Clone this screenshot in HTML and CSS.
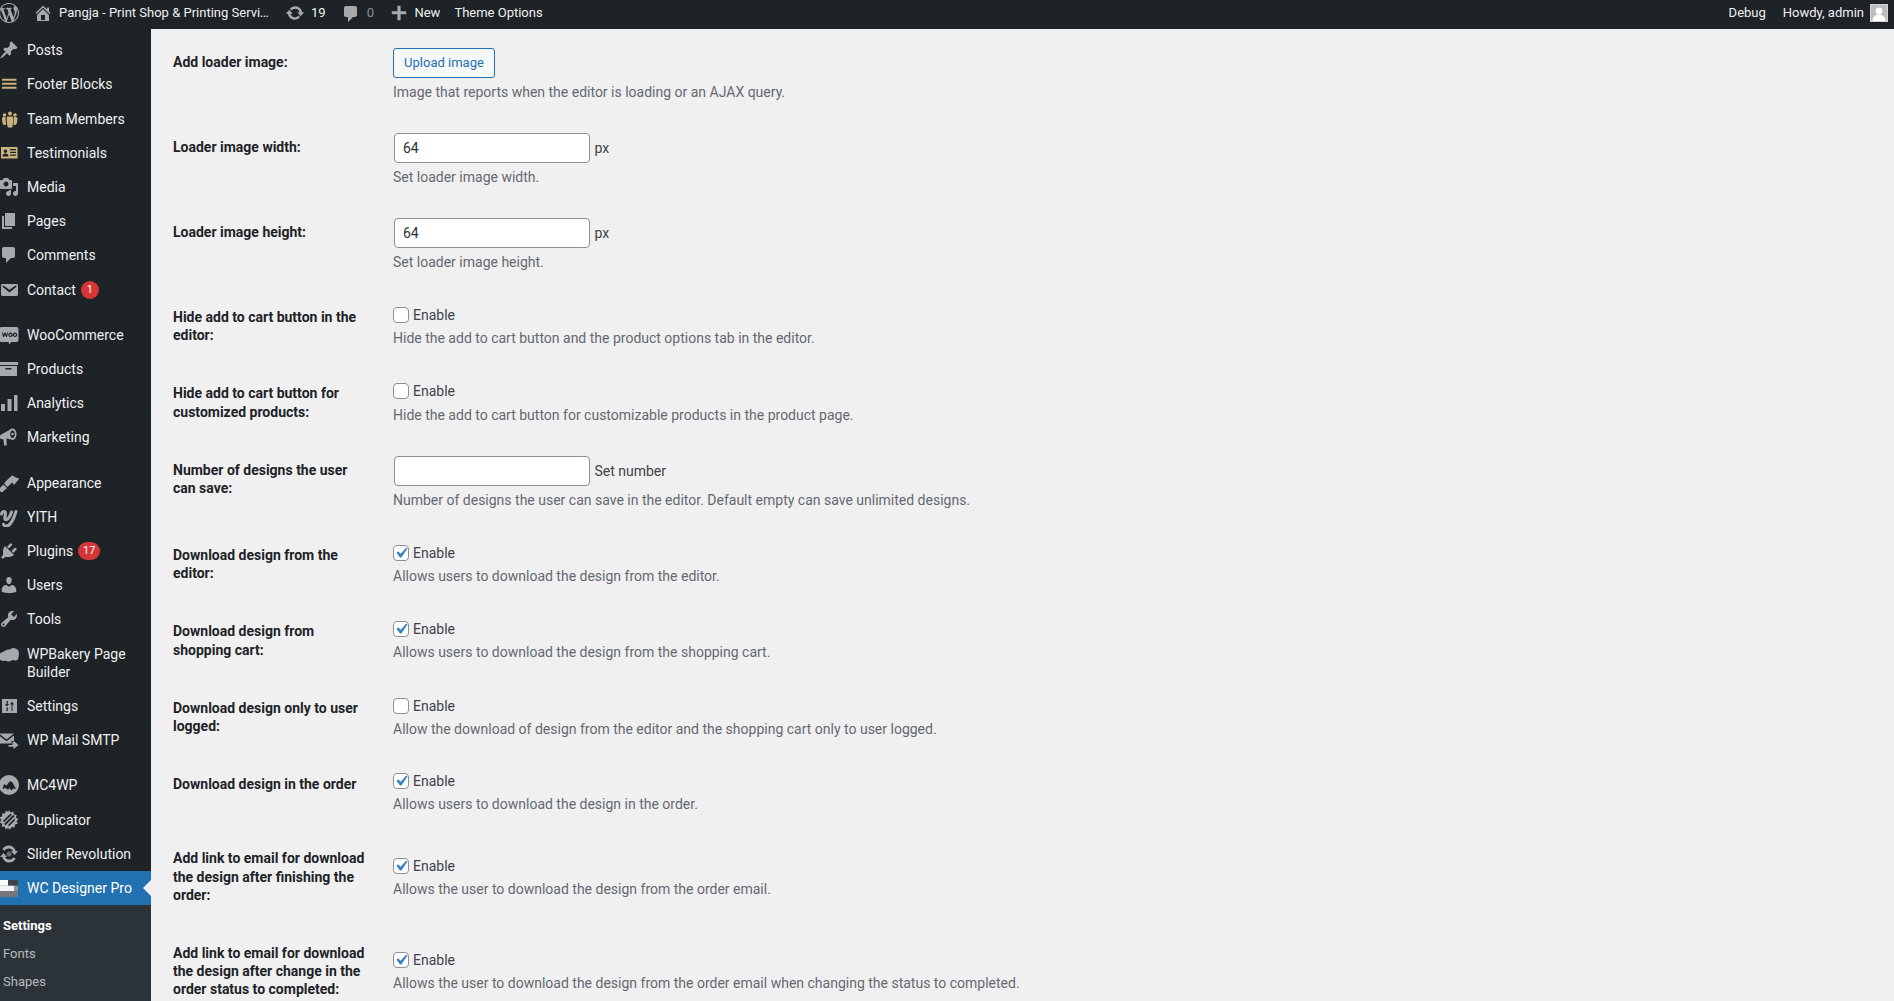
FILE: index.html
```html
<!DOCTYPE html>
<html lang="en">
<head>
<meta charset="utf-8">
<title>WC Designer Pro Settings</title>
<link rel="stylesheet" href="styles.css">
</head>
<body>
<header class="bar">
  <nav class="bar-left">
    <a class="bar-item logo"><svg class="bar-ico logo-ico" viewBox="0 0 20 20"><path fill-rule="evenodd" d="M20 10c0-5.51-4.49-10-10-10C4.48 0 0 4.49 0 10c0 5.52 4.48 10 10 10 5.51 0 10-4.48 10-10zM7.78 15.37L4.37 6.22c.55-.02 1.17-.08 1.17-.08.5-.06.44-1.13-.06-1.11 0 0-1.45.11-2.37.11-.18 0-.37 0-.58-.01C4.12 2.69 6.87 1.11 10 1.11c2.33 0 4.45.87 6.05 2.34-.68-.11-1.65.39-1.65 1.58 0 .74.45 1.36.9 2.1.35.61.55 1.36.55 2.46 0 1.49-1.4 5-1.4 5l-3.03-8.37c.54-.02.82-.17.82-.17.5-.05.44-1.25-.06-1.22 0 0-1.44.12-2.38.12-.87 0-2.33-.12-2.33-.12-.5-.03-.56 1.2-.06 1.22l.92.08 1.26 3.41zM17.41 10c.24-.64.74-1.87.43-4.25.7 1.29 1.05 2.71 1.05 4.25 0 3.29-1.73 6.24-4.4 7.78.97-2.59 1.94-5.2 2.92-7.78zM6.1 18.09C3.12 16.65 1.11 13.53 1.11 10c0-1.3.23-2.48.72-3.59C3.25 10.3 4.67 14.2 6.1 18.09zm4.03-6.63l2.58 6.98c-.86.29-1.76.45-2.71.45-.79 0-1.57-.11-2.29-.33.81-2.38 1.62-4.74 2.42-7.1z"/></svg></a>
    <a class="bar-item site"><svg class="bar-ico" viewBox="0 0 20 20"><path d="M16 8.5l1.53 1.53-1.06 1.06L10 4.62l-6.47 6.47-1.06-1.06L10 2.5l4 4v-2h2v4zm-6-2.46l6 5.99V18H4v-5.97zM12 17v-5H8v5h4z"/></svg><span class="site-name">Pangja - Print Shop &amp; Printing Servi…</span></a>
    <a class="bar-item updates"><svg class="bar-ico" viewBox="0 0 20 20"><path d="M10.2 3.28c3.53 0 6.43 2.61 6.92 6h2.08l-3.5 4-3.5-4h2.32c-.45-1.97-2.21-3.45-4.32-3.45-1.45 0-2.73.71-3.54 1.78L4.95 5.66C6.23 4.2 8.11 3.28 10.2 3.28zm-.4 13.44c-3.52 0-6.43-2.61-6.92-6H.8l3.5-4c1.17 1.33 2.33 2.67 3.5 4H5.48c.45 1.97 2.21 3.45 4.32 3.45 1.45 0 2.73-.71 3.54-1.78l1.71 1.95c-1.28 1.46-3.15 2.38-5.25 2.38z"/></svg><span>19</span></a>
    <a class="bar-item comments"><svg class="bar-ico" viewBox="0 0 20 20"><path d="M5 2h9c1.1 0 2 .9 2 2v7c0 1.1-.9 2-2 2h-2l-5 5v-5H5c-1.1 0-2-.9-2-2V4c0-1.1.9-2 2-2z"/></svg><span class="muted">0</span></a>
    <a class="bar-item new"><svg class="bar-ico" viewBox="0 0 20 20"><path d="M18 8v3.5h-6.25V18h-3.5v-6.5H2V8h6.25V2h3.5v6z"/></svg><span>New</span></a>
    <a class="bar-item theme">Theme Options</a>
  </nav>
  <nav class="bar-right">
    <a class="bar-item debug">Debug</a>
    <a class="bar-item howdy">Howdy, admin<svg class="avatar" viewBox="0 0 18 18"><rect width="18" height="18" fill="#d4d4d4"/><rect x="1" y="1" width="16" height="16" fill="#bdbdbd"/><circle cx="9" cy="7" r="3.4" fill="#fff"/><path d="M2.5 17c0-4.5 3-6.2 6.5-6.2s6.500 1.700 6.500 6.200z" fill="#fff"/></svg></a>
  </nav>
</header>

<div class="layout">
  <aside class="side">
    <ul class="menu">
      <li class="item"><svg class="ico" viewBox="0 0 20 20"><path d="M10.44 3.02l1.82-1.82 6.36 6.35-1.83 1.82c-1.05-.68-2.48-.57-3.41.36l-.75.75c-.92.93-1.04 2.35-.35 3.41l-1.83 1.82-2.41-2.41-2.8 2.79c-.42.42-3.38 2.71-3.8 2.29s1.86-3.39 2.28-3.81l2.79-2.79L4.1 9.36l1.83-1.82c1.05.69 2.48.57 3.4-.36l.75-.75c.93-.92 1.05-2.35.36-3.41z"/></svg>Posts</li>
      <li class="item"><svg class="ico gold" viewBox="0 0 20 20"><path d="M3 4.700h14.500v2H3zM3 8.700h14.500v2H3zM3 12.700h14.500v2H3z"/></svg>Footer Blocks</li>
      <li class="item"><svg class="ico gold" viewBox="0 0 20 20"><circle cx="5.500" cy="6" r="1.800"/><circle cx="11" cy="4.500" r="2"/><circle cx="16" cy="6" r="1.800"/><path d="M3 9.500c0-1 1-1.500 2-1.500h1.500L7 16H5c-1 0-2-3-2-6.500zM18.500 9.500c0-1-1-1.500-2-1.500H15l-.5 8h2c1 0 2-3 2-6.500zM8 7.500h6c.5 2 .5 6-.8 11H8.800C7.500 14 7.500 10 8 7.500z"/></svg>Team Members</li>
      <li class="item"><svg class="ico gold" viewBox="0 0 20 20"><path fill-rule="evenodd" d="M2 4h16.500v11.500H2zM11 6v1.300h6V6zm0 2.700V10h6V8.700zm0 2.800v1.300h6v-1.300zM6.500 6.500a1.700 1.700 0 1 0 .01 0zM3.500 13.500h6c0-2-1-3-3-3s-3 1-3 3z"/></svg>Testimonials</li>
      <li class="item"><svg class="ico" viewBox="0 0 20 20"><path d="M13 11V4c0-.55-.45-1-1-1h-1.670L9 1H5L3.670 3H2c-.55 0-1 .45-1 1v7c0 .55.45 1 1 1h10c.55 0 1-.45 1-1zM7 4.500c1.380 0 2.500 1.120 2.500 2.500S8.380 9.500 7 9.500 4.500 8.380 4.500 7 5.620 4.500 7 4.500zM14 6h5v10.500c0 1.380-1.120 2.500-2.500 2.500S14 17.880 14 16.500s1.120-2.500 2.500-2.500c.17 0 .34.02.5.05V9h-3V6zm-4 8.050V13h2v3.500c0 1.380-1.120 2.500-2.500 2.500S7 17.880 7 16.500 8.120 14 9.500 14c.17 0 .34.02.5.05z"/></svg>Media</li>
      <li class="item"><svg class="ico" viewBox="0 0 20 20"><path d="M6 15V2h10v13H6zm-1 1h8v2H3V5h2v11z"/></svg>Pages</li>
      <li class="item"><svg class="ico" viewBox="0 0 20 20"><path d="M5 2h9c1.100 0 2 .9 2 2v7c0 1.100-.9 2-2 2h-2l-5 5v-5H5c-1.100 0-2-.9-2-2V4c0-1.100.9-2 2-2z"/></svg>Comments</li>
      <li class="item"><svg class="ico" viewBox="0 0 20 20"><path d="M3.870 4h13.250C18.370 4 19 4.590 19 5.790v8.420c0 1.190-.63 1.790-1.880 1.790H3.870c-1.250 0-1.880-.6-1.880-1.790V5.790c0-1.200.63-1.790 1.880-1.790zm6.620 8.600l6.740-5.530c.24-.2.430-.66.130-1.070-.29-.41-.82-.42-1.170-.17l-5.700 3.860L4.800 5.830c-.35-.25-.88-.24-1.170.17-.3.410-.11.870.13 1.070z"/></svg>Contact<span class="badge">1</span></li>
      <li class="item sep"><svg class="ico" viewBox="0 0 20 20"><path fill-rule="evenodd" d="M2.500 2h15A2 2 0 0 1 19.500 4v11a2 2 0 0 1-2 2H12l-1.500 2.500L9.500 17h-7a2 2 0 0 1-2-2V4a2 2 0 0 1 2-2zM3 7.500l1 4.500h1l1-2.500 1 2.500h1l1-4.500H8l-.6 2.700L6.500 7.500h-1l-.9 2.700L4 7.500zm8.500 0a2.200 2.300 0 1 0 .01 0zm0 1.200a1 1.100 0 1 1-.01 0zm4.500-1.200a2.200 2.300 0 1 0 .01 0zm0 1.200a1 1.100 0 1 1-.01 0z"/></svg>WooCommerce</li>
      <li class="item"><svg class="ico" viewBox="0 0 20 20"><path fill-rule="evenodd" d="M0 3h19v3H0zM1 7h17v10H1zM6.500 9v1.500h6V9z"/></svg>Products</li>
      <li class="item"><svg class="ico" viewBox="0 0 20 20"><path d="M2 11h4v7H2zM8.500 6h4v12h-4zM15 2h3.500v16H15z"/></svg>Analytics</li>
      <li class="item"><svg class="ico" viewBox="0 0 20 20"><path fill-rule="evenodd" d="M13.500 1.500c2.500 0 4 2.500 4 5.500s-1.500 6-4 6c-.5 0-1-.2-1.300-.4L7.500 11.500 7.800 18.500H5L4.500 12.500 2 12c-1.500-.5-1.500-4 0-4.500L10.500 3c.8-1 1.800-1.500 3-1.500zm0 2c-1.300 0-2.300 1.600-2.300 3.700s1 3.800 2.300 3.800 2.300-1.700 2.300-3.800-1-3.700-2.300-3.700z"/><circle cx="13.500" cy="7" r="1.300"/></svg>Marketing</li>
      <li class="item sep"><svg class="ico" viewBox="0 0 20 20"><path d="M8 7l5-4.500c2 .5 4 2.500 7.500 3L15 12c-.5-1-1-1.500-2-2.500L8.500 14 5 10.500zM4.300 11.500L8 15l-5 4.500-3-2V16z"/></svg>Appearance</li>
      <li class="item"><svg class="ico yith" viewBox="0 0 20 20"><path d="M2.500 7C3.500 3.500 6.500 4 6.500 6.500c0 2.500-1.500 4.500-.3 5.800 1.800 1.500 5-2.500 6.300-7.300"/><path d="M17 4.500c-1.500 5-3.500 10.500-7 13.500-2 1.500-5 1.500-5.500-.8"/></svg>YITH</li>
      <li class="item"><svg class="ico" viewBox="0 0 20 20"><path d="M13.110 4.360L9.870 7.600 8 5.730l3.240-3.240c.35-.34 1.050-.2 1.560.32.52.51.66 1.210.31 1.550zm-8 1.770l.91-1.120 9.010 9.010-1.190.84c-.71.710-2.630 1.160-3.820 1.160H6.140L4.900 17.260c-.59.590-1.540.590-2.120 0-.59-.58-.59-1.530 0-2.120l1.240-1.240v-3.880c0-1.130.4-3.190 1.090-3.890zm7.260 3.970l3.240-3.240c.34-.35 1.040-.21 1.550.31.52.51.66 1.210.31 1.550l-3.240 3.250z"/></svg>Plugins<span class="badge wide">17</span></li>
      <li class="item"><svg class="ico" viewBox="0 0 20 20"><path d="M10 9.250c-2.270 0-2.730-3.440-2.730-3.440C7 4.020 7.820 2 9.970 2c2.160 0 2.980 2.020 2.710 3.810 0 0-.41 3.440-2.680 3.440zm0 2.570L12.720 10c2.390 0 4.520 2.330 4.520 4.530v2.490s-3.650 1.130-7.240 1.130c-3.650 0-7.240-1.130-7.240-1.130v-2.490c0-2.250 1.940-4.480 4.470-4.480z"/></svg>Users</li>
      <li class="item"><svg class="ico" viewBox="0 0 20 20"><path d="M16.680 9.770c-1.340 1.340-3.300 1.670-4.950.99l-5.410 6.520c-.99.990-2.590.99-3.580 0s-.99-2.590 0-3.570l6.520-5.420c-.68-1.650-.35-3.610.99-4.950 1.280-1.280 3.120-1.620 4.720-1.060l-2.890 2.890 2.820 2.820 2.860-2.870c.53 1.580.18 3.390-1.080 4.650zM3.810 16.210c.4.390 1.040.39 1.430 0 .4-.4.4-1.040 0-1.430-.39-.4-1.030-.4-1.430 0-.39.390-.39 1.030 0 1.430z"/></svg>Tools</li>
      <li class="item"><svg class="ico ico-top" viewBox="0 0 20 20"><circle cx="4.500" cy="11.500" r="4.500"/><circle cx="9.500" cy="10.500" r="6"/><circle cx="14.500" cy="8.500" r="5.500"/><circle cx="16" cy="12" r="3.500"/></svg>WPBakery Page Builder</li>
      <li class="item"><svg class="ico" viewBox="0 0 20 20"><path fill-rule="evenodd" d="M3 3h15v14H3zM7.500 5v3H6l2 2.500 2-2.500H8.800V5zm5 3.500v6.500h1V8.500h1.500l-2-3-2 3zM7.500 11.500V15h1.300v-3.500z"/></svg>Settings</li>
      <li class="item"><svg class="ico" viewBox="0 0 20 20"><path d="M0 3.500h15L7.500 9.500zM0 5.500l7.500 5.800L15 5.500V11h-2.500v2.500H0zM13.500 12v3H9.500v1.800h5.500l-1 1.700h1.500l4-3.500-4-3.500z"/></svg>WP Mail SMTP</li>
      <li class="item sep"><svg class="ico" viewBox="0 0 20 20"><path fill-rule="evenodd" d="M10 0a10 10 0 1 1 0 20 10 10 0 0 1 0-20zM3.500 14l1.500-5 2.500 1.500L11 6l2.500 1.500L17 14l-3-.5-1.500 2-2-2.500-1.500 2-2-2z"/></svg>MC4WP</li>
      <li class="item"><svg class="ico" viewBox="0 0 20 20"><path fill-rule="evenodd" d="M10 0l1.500 2.500 2.800-1 .5 2.900 2.900.5-1 2.800L19.500 9l-2 2.200 1.400 2.600-2.900.8-.3 3-2.900-.6L11 19.500 9 18l-2.400 1.500-.9-2.900-3 .2.400-3L.6 12.500l1.700-2.500L.6 7.500l2.700-1.300-.3-3 3 .2L7 .6 9.200 2zM14 5L5 14l1.500 1.200 9-9zM11 4L4.200 10.800l.5 1.700L13 4.500zM15.500 8.500L8.500 15.500l2 .3 5.500-5.500z"/></svg>Duplicator</li>
      <li class="item"><svg class="ico" viewBox="0 0 20 20"><path d="M10 4.500c1.800 0 3.300 1 4 2.500h-2l3.500 4 3.500-4h-2.300C15.800 3.500 13 1.500 10 1.500S4.500 3 3.300 5.500l2.500 1.300C6.500 5.400 8 4.500 10 4.500zM10 15.500c-1.800 0-3.300-1-4-2.500h2L4.500 9 1 13h2.300c.9 3.500 3.700 5.500 6.700 5.500s5.500-1.500 6.700-4l-2.500-1.300c-.7 1.400-2.200 2.300-4.200 2.300z"/><circle cx="10" cy="10" r="2.500" opacity=".55"/></svg>Slider Revolution</li>
      <li class="item active"><svg class="ico blocks" viewBox="0 0 20 20"><rect x="1" y="2" width="8" height="5.700" fill="#fff"/><rect x="9" y="2" width="10" height="5.700" fill="#3f4449"/><rect x="1" y="7.700" width="14" height="5.300" fill="#f4f4f4"/><rect x="15" y="7.700" width="4" height="5.300" fill="#8f9296"/><rect x="1" y="13" width="18" height="6" fill="#74777b"/></svg>WC Designer Pro</li>
    </ul>
    <ul class="sub">
      <li class="sub-item current">Settings</li>
      <li class="sub-item">Fonts</li>
      <li class="sub-item">Shapes</li>
    </ul>
  </aside>

  <main class="main">
    <div class="row">
      <div class="key">Add loader image:</div>
      <div class="val"><button class="btn">Upload image</button><p class="desc">Image that reports when the editor is loading or an AJAX query.</p></div>
    </div>
    <div class="row">
      <div class="key">Loader image width:</div>
      <div class="val"><input class="inp" type="text" value="64"> <span class="unit">px</span><p class="desc">Set loader image width.</p></div>
    </div>
    <div class="row">
      <div class="key">Loader image height:</div>
      <div class="val"><input class="inp" type="text" value="64"> <span class="unit">px</span><p class="desc">Set loader image height.</p></div>
    </div>
    <div class="row">
      <div class="key">Hide add to cart button in the editor:</div>
      <div class="val"><label class="chk"><input type="checkbox">Enable</label><p class="desc">Hide the add to cart button and the product options tab in the editor.</p></div>
    </div>
    <div class="row">
      <div class="key">Hide add to cart button for customized products:</div>
      <div class="val"><label class="chk"><input type="checkbox">Enable</label><p class="desc">Hide the add to cart button for customizable products in the product page.</p></div>
    </div>
    <div class="row">
      <div class="key">Number of designs the user can save:</div>
      <div class="val"><input class="inp" type="text"> <span class="unit">Set number</span><p class="desc">Number of designs the user can save in the editor. Default empty can save unlimited designs.</p></div>
    </div>
    <div class="row">
      <div class="key">Download design from the editor:</div>
      <div class="val"><label class="chk"><input type="checkbox" checked>Enable</label><p class="desc">Allows users to download the design from the editor.</p></div>
    </div>
    <div class="row">
      <div class="key">Download design from shopping cart:</div>
      <div class="val"><label class="chk"><input type="checkbox" checked>Enable</label><p class="desc">Allows users to download the design from the shopping cart.</p></div>
    </div>
    <div class="row">
      <div class="key">Download design only to user logged:</div>
      <div class="val"><label class="chk"><input type="checkbox">Enable</label><p class="desc">Allow the download of design from the editor and the shopping cart only to user logged.</p></div>
    </div>
    <div class="row">
      <div class="key">Download design in the order</div>
      <div class="val"><label class="chk"><input type="checkbox" checked>Enable</label><p class="desc">Allows users to download the design in the order.</p></div>
    </div>
    <div class="row">
      <div class="key">Add link to email for download the design after finishing the order:</div>
      <div class="val"><label class="chk"><input type="checkbox" checked>Enable</label><p class="desc">Allows the user to download the design from the order email.</p></div>
    </div>
    <div class="row">
      <div class="key">Add link to email for download the design after change in the order status to completed:</div>
      <div class="val"><label class="chk"><input type="checkbox" checked>Enable</label><p class="desc">Allows the user to download the design from the order email when changing the status to completed.</p></div>
    </div>
  </main>
</div>
</body>
</html>
```
FILE: styles.css
```css
* { box-sizing: border-box; }
html, body { margin: 0; height: 100%; overflow: hidden; }
body {
  background: #f0f0f1;
  color: #3c434a;
  font: 14px/1.3 Roboto, "Liberation Sans", sans-serif;
}
ul { list-style: none; margin: 0; padding: 0; }

/* admin bar */
.bar {
  height: 29px;
  background: #1d2327;
  color: #f0f0f1;
  font-size: 13px;
  line-height: 26px;
  display: flex;
  justify-content: space-between;
}
.bar-left, .bar-right { display: flex; }
.bar-item { display: flex; align-items: center; height: 26px; white-space: nowrap; }
.bar-ico { width: 20px; height: 20px; fill: #a7aaad; flex: none; }
.logo { margin-right: 14px; margin-left: -1px; }
.site { margin-right: 14px; }
.site .bar-ico { margin-right: 6px; }
.site-name { width: 212px; }
.updates { margin-right: 15px; }
.updates .bar-ico { margin-right: 6px; }
.comments { margin-right: 16px; }
.comments .bar-ico { margin-right: 6px; margin-top: 2px; }
.muted { color: #8c8f94; }
.new { margin-right: 14px; }
.new .bar-ico { width: 18px; height: 18px; margin-right: 6.500px; }
.debug { margin-right: 17px; }
.howdy { margin-right: 6px; }
.avatar { width: 18px; height: 18px; margin-left: 6px; }

/* layout */
.layout { display: flex; height: 972px; }
.side { width: 151px; flex: none; background: #1d2327; padding-top: 4.100px; overflow: hidden; }
.main { flex: 1; padding: 4px 0 0 22px; min-width: 0; }

/* side menu */
.item {
  position: relative;
  display: flex;
  align-items: center;
  padding: 8px 8px 8px 27px;
  line-height: 18.200px;
  color: #f0f0f1;
}
.item.sep { margin-top: 11px; }
.ico { position: absolute; left: -1px; top: 7px; width: 20px; height: 20px; fill: #a7aaad; }
.ico-top { top: 8px; }
.gold { fill: #c9b27c; }
.yith { fill: none; stroke: #a7aaad; stroke-width: 3; stroke-linecap: round; }
.item.active { background: #2271b1; color: #fff; }
.item.active::after {
  content: "";
  position: absolute;
  right: 0;
  top: 50%;
  margin-top: -8px;
  border: 8px solid transparent;
  border-right-color: #f0f0f1;
  border-left-width: 0;
}
.badge {
  width: 18px;
  height: 18px;
  margin: 0 0 0 5px;
  border-radius: 9px;
  background: #d63638;
  color: #fff;
  font-size: 11px;
  line-height: 18px;
  text-align: center;
  flex: none;
}
.badge.wide { width: 22px; }
.sub { background: #2c3338; padding: 7px 0 7px; }
.sub-item {
  padding: 5px 0 5px 3px;
  font-size: 13px;
  line-height: 18px;
  color: rgba(240, 246, 252, .7);
}
.sub-item.current { color: #fff; font-weight: 700; }

/* settings rows */
.row { display: flex; }
.key {
  width: 200px;
  flex: none;
  padding: 20px 0;
  margin-right: 10px;
  font-weight: 700;
  color: #1d2327;
}
.val { padding: 15px 10px 15.200px; flex: 1; min-width: 0; align-self: center; }
.desc { margin: 4px 0 1.700px; font-size: 14px; line-height: 18px; color: #646970; }
.btn {
  display: block;
  width: 102px;
  height: 30px;
  padding: 0;
  border: 1px solid #2271b1;
  border-radius: 3px;
  background: #f6f7f7;
  color: #2271b1;
  font: 13px/28px Roboto, "Liberation Sans", sans-serif;
}
.btn + .desc { margin: 5px 0 1.500px; }
.inp {
  width: 196px;
  height: 30px;
  margin: .3px 1px 1px 1px;
  padding: 0 8px;
  border: 1px solid #8c8f94;
  border-radius: 4px;
  background: #fff;
  color: #2c3338;
  font: 14px/28px Roboto, "Liberation Sans", sans-serif;
  vertical-align: top;
}
.unit { line-height: 31.300px; vertical-align: top; }
.chk { display: flex; align-items: flex-start; height: 23.800px; padding-top: 1px; line-height: 21px; }
.chk + .desc { margin: 1.300px 0 1px; }
.chk input {
  appearance: none;
  width: 16px;
  height: 16px;
  margin: 2px 4px 0 0;
  border: 1px solid #8c8f94;
  border-radius: 4px;
  background: #fff;
  flex: none;
}
.chk input:checked {
  background: #fff url("data:image/svg+xml,%3Csvg xmlns='http://www.w3.org/2000/svg' viewBox='0 0 20 20'%3E%3Cpath d='M14.830 4.890l1.340.94-5.810 8.380H9.020L5.780 9.670l1.340-1.250 2.570 2.400z' fill='%233582c4'/%3E%3C/svg%3E") center/21px 21px no-repeat;
}
```
